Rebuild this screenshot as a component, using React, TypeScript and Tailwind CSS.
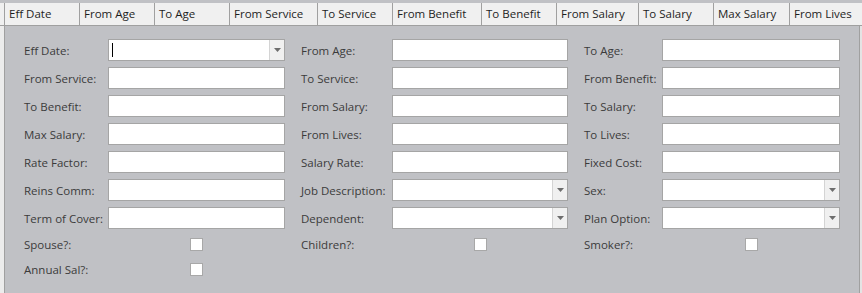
import React from "react";

const cols: { name: string; w: string }[] = [
  { name: "Eff Date", w: "w-[75px]" },
  { name: "From Age", w: "w-[75px]" },
  { name: "To Age", w: "w-[75px]" },
  { name: "From Service", w: "w-[88px]" },
  { name: "To Service", w: "w-[75px]" },
  { name: "From Benefit", w: "w-[89px]" },
  { name: "To Benefit", w: "w-[75px]" },
  { name: "From Salary", w: "w-[82px]" },
  { name: "To Salary", w: "w-[75px]" },
  { name: "Max Salary", w: "w-[76px]" },
];

type Field = { label: string; kind: "text" | "select" | "date" | "check" };

const rows: Field[][] = [
  [
    { label: "Eff Date:", kind: "date" },
    { label: "From Age:", kind: "text" },
    { label: "To Age:", kind: "text" },
  ],
  [
    { label: "From Service:", kind: "text" },
    { label: "To Service:", kind: "text" },
    { label: "From Benefit:", kind: "text" },
  ],
  [
    { label: "To Benefit:", kind: "text" },
    { label: "From Salary:", kind: "text" },
    { label: "To Salary:", kind: "text" },
  ],
  [
    { label: "Max Salary:", kind: "text" },
    { label: "From Lives:", kind: "text" },
    { label: "To Lives:", kind: "text" },
  ],
  [
    { label: "Rate Factor:", kind: "text" },
    { label: "Salary Rate:", kind: "text" },
    { label: "Fixed Cost:", kind: "text" },
  ],
  [
    { label: "Reins Comm:", kind: "text" },
    { label: "Job Description:", kind: "select" },
    { label: "Sex:", kind: "select" },
  ],
  [
    { label: "Term of Cover:", kind: "text" },
    { label: "Dependent:", kind: "select" },
    { label: "Plan Option:", kind: "select" },
  ],
];

const checkRows: Field[][] = [
  [
    { label: "Spouse?:", kind: "check" },
    { label: "Children?:", kind: "check" },
    { label: "Smoker?:", kind: "check" },
  ],
  [{ label: "Annual Sal?:", kind: "check" }],
];

// label width, input width, left gap per column
const layout = [
  { lw: "w-[84px]", iw: "w-[177px]", ml: "" },
  { lw: "w-[91px]", iw: "w-[176px]", ml: "ml-[16px]" },
  { lw: "w-[78px]", iw: "w-[178px]", ml: "ml-[16px]" },
];

function Caret() {
  return (
    <div className="flex w-[15px] items-center justify-center border-l border-[#d4d4d4] bg-[#f0f0f0]">
      <svg width="7" height="4" viewBox="0 0 7 4">
        <path d="M0 0h7L3.5 4z" fill="#6d6d6d" />
      </svg>
    </div>
  );
}

function Input({ kind, w }: { kind: Field["kind"]; w: string }) {
  if (kind === "check") {
    return (
      <div className={`${w} flex h-[13px] justify-center`}>
        <div className="h-[13px] w-[13px] border border-[#a8a8a8] bg-white" />
      </div>
    );
  }
  return (
    <div className={`${w} flex h-[22px] border border-[#a5a5a5] bg-white`}>
      <div className="flex flex-1 items-center pl-[3px]">
        {kind === "date" && <div className="h-[14px] w-px bg-black" />}
      </div>
      {kind !== "text" && <Caret />}
    </div>
  );
}

function FormRow({ fields, h }: { fields: Field[]; h: string }) {
  return (
    <div className={`flex items-center ${h}`}>
      {fields.map((f, i) => (
        <div key={f.label} className={`flex items-center ${layout[i].ml}`}>
          <div className={`${layout[i].lw} whitespace-nowrap pt-px text-[#3b3b3b]`}>{f.label}</div>
          <Input kind={f.kind} w={layout[i].iw} />
        </div>
      ))}
    </div>
  );
}

export default function App() {
  return (
    <div
      className="flex h-[293px] w-[862px] flex-col overflow-hidden bg-[#c0c1c5] text-[11.5px] leading-none"
      style={{ fontFamily: '"Open Sans", "Noto Sans", sans-serif' }}
    >
      <div className="h-[3px]" />
      <div className="flex h-[23px] border-b border-[#a0a0a0] bg-[#f0f0f0] text-[#1e1e1e]">
        <div className="w-[5px] border-r border-[#a0a0a0]" />
        {cols.map((c) => (
          <div key={c.name} className={`${c.w} flex items-center whitespace-nowrap border-r border-[#a0a0a0] pl-[4px]`}>
            {c.name}
          </div>
        ))}
        <div className="flex flex-1 items-center whitespace-nowrap pl-[4px]">From Lives</div>
      </div>
      <div className="flex flex-1">
        <div className="w-[5px] border-r border-[#a0a0a0] bg-[#ececec]" />
        <div className="flex flex-1 flex-col pl-[19px] pt-[13px]">
          <div className="flex flex-col gap-[6px]">
            {rows.map((r, i) => (
              <FormRow key={i} fields={r} h="h-[22px]" />
            ))}
          </div>
          <div className="mt-[9px] flex flex-col gap-[12px]">
            {checkRows.map((r, i) => (
              <FormRow key={i} fields={r} h="h-[13px]" />
            ))}
          </div>
        </div>
        <div className="w-[3px] border-l border-[#a0a0a0] bg-[#e4e4e4]" />
      </div>
    </div>
  );
}
